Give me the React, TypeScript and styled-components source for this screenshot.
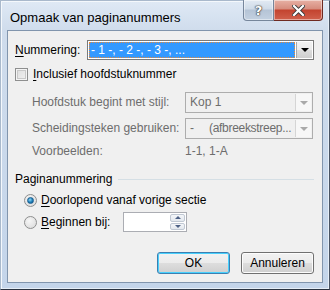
import React from 'react';
import styled, { createGlobalStyle } from 'styled-components';

const GlobalStyle = createGlobalStyle`
  html, body {
    margin: 0;
    padding: 0;
    background: #ffffff;
  }
  body {
    font-family: 'Liberation Sans', Arial, sans-serif;
    font-size: 12px;
    line-height: 15px;
    color: #000;
  }
`;

const Window = styled.div`
  width: 330px;
  height: 290px;
  box-sizing: border-box;
  display: flex;
  flex-direction: column;
  background: linear-gradient(180deg, #dfe9f5 0px, #cfdcec 30px, #c4d5ea 100%);
  border: 1px solid #7b8ea6;
  border-top-color: #a9b9cc;
  border-left-color: #a9b9cc;
  border-bottom-color: #2a3340;
  border-right-color: #4a5565;
  box-shadow: inset 1px 1px 0 #f4f8fc, inset -1px -1px 0 #e6eef7;
`;

const TitleBar = styled.div`
  height: 29px;
  display: flex;
  align-items: flex-start;
  justify-content: space-between;
  padding-left: 9px;
  flex-shrink: 0;
`;

const Title = styled.span`
  font-size: 13px;
  line-height: 15px;
  margin-top: 9px;
`;

const Caption = styled.div`
  display: flex;
  margin-right: 6px;
  margin-top: -1px;
`;

const CaptionButton = styled.div<{ $close?: boolean }>`
  width: ${(p) => (p.$close ? '49px' : '31px')};
  height: 21px;
  box-sizing: border-box;
  display: flex;
  align-items: center;
  justify-content: center;
  border: 1px solid ${(p) => (p.$close ? '#6e2a22' : '#76869b')};
  border-top: none;
  border-radius: ${(p) => (p.$close ? '0 0 4px 0' : '0 0 0 4px')};
  border-left-width: ${(p) => (p.$close ? '0' : '1px')};
  background: ${(p) =>
    p.$close
      ? 'linear-gradient(180deg, #e7b1a5 0%, #d68c7d 45%, #c3432f 50%, #d0604c 100%)'
      : 'linear-gradient(180deg, #e2eaf3 0%, #cfdbe8 45%, #b5c4d6 50%, #c3d1e1 100%)'};
  box-shadow: inset 0 0 0 1px rgba(255, 255, 255, 0.45);
  color: #fff;
  font-family: 'DejaVu Sans', sans-serif;
  font-weight: bold;
  font-size: 13px;
  text-shadow: 0 0 1px #333, 0 0 1px #333, 0 0 2px #444;
`;

const Client = styled.div`
  flex: 1;
  margin: 0 6px 6px 6px;
  border: 1px solid #8195ad;
  background: #f0f0f0;
  padding: 9px 8px 0 7px;
  display: flex;
  flex-direction: column;
`;

const Row = styled.div`
  display: flex;
  align-items: center;
`;

const Label = styled.span<{ $disabled?: boolean }>`
  color: ${(p) => (p.$disabled ? '#6d6d6d' : '#000')};
  white-space: nowrap;
`;

const U = styled.span`
  text-decoration: underline;
  text-underline-offset: 2px;
`;

const MainSelect = styled.div`
  margin-left: auto;
  width: 227px;
  height: 20px;
  box-sizing: border-box;
  border: 1px solid #7a7a7a;
  background: #fff;
  display: flex;
  padding: 1px;
`;

const Highlight = styled.div`
  flex: 1;
  background: #3399ff;
  color: #fff;
  display: flex;
  align-items: center;
  padding-left: 2px;
  outline: 1px dotted #e78a3a;
  outline-offset: -1px;
  white-space: pre;
`;

const DropButton = styled.div<{ $disabled?: boolean }>`
  width: 15px;
  flex-shrink: 0;
  margin-left: 1px;
  display: flex;
  align-items: center;
  justify-content: center;
  background: ${(p) =>
    p.$disabled ? '#f7f7f7' : 'linear-gradient(180deg, #f2f2f2 0%, #ebebeb 50%, #dddddd 51%, #cfcfcf 100%)'};
  border-left: 1px solid ${(p) => (p.$disabled ? '#d5d5d5' : '#aaa')};
`;

const Arrow = styled.div<{ $disabled?: boolean }>`
  width: 0;
  height: 0;
  border-left: 4px solid transparent;
  border-right: 4px solid transparent;
  border-top: 4px solid ${(p) => (p.$disabled ? '#a9a9a9' : '#000')};
`;

const CheckRow = styled(Row)`
  margin-top: 7px;
  height: 15px;
`;

const CheckBox = styled.div`
  width: 13px;
  height: 13px;
  box-sizing: border-box;
  border: 1px solid #8e8f8f;
  background: linear-gradient(135deg, #dcdcdc 0%, #f2f2f2 100%);
  box-shadow: inset 0 0 0 1px #f4f4f4, inset 0 0 0 2px #c8c8c8;
  margin-right: 5px;
`;

const Options = styled.div`
  display: grid;
  grid-template-columns: 153px 128px;
  grid-template-rows: 21px 21px 21px;
  row-gap: 5px;
  margin-top: 10px;
  margin-left: 17px;
  align-items: center;
`;

const ExampleLabel = styled(Label)`
  margin-top: -6px;
`;

const DisabledSelect = styled.div`
  height: 21px;
  box-sizing: border-box;
  border: 1px solid #adadad;
  background: #f0f0f0;
  display: flex;
  padding: 1px;
`;

const DisabledValue = styled.div`
  flex: 1;
  min-width: 0;
  color: #6d6d6d;
  padding-left: 3px;
  display: flex;
  align-items: center;
  white-space: pre;
  overflow: hidden;
`;

const ValueNote = styled.span`
  margin-left: 15px;
  letter-spacing: -0.3px;
`;

const GroupHeader = styled(Row)`
  margin-top: 7px;
  height: 15px;
`;

const GroupLine = styled.div`
  flex: 1;
  height: 0;
  border-top: 1px solid #d5dfe5;
  margin-left: 6px;
`;

const RadioRow = styled(Row)<{ $first?: boolean }>`
  margin-top: ${(p) => (p.$first ? '3px' : '2px')};
  margin-left: 9px;
  height: 20px;
`;

const Radio = styled.div<{ $checked?: boolean }>`
  width: 13px;
  height: 13px;
  box-sizing: border-box;
  border-radius: 50%;
  border: 1px solid #8e8f8f;
  background: radial-gradient(circle at 40% 35%, #f6f6f6 0%, #d8d8d8 100%);
  margin-right: 4px;
  display: flex;
  align-items: center;
  justify-content: center;
  &::after {
    content: '';
    display: ${(p) => (p.$checked ? 'block' : 'none')};
    width: 7px;
    height: 7px;
    border-radius: 50%;
    background: radial-gradient(circle at 40% 35%, #8fd8f7 0%, #1e7fb8 55%, #0d4f86 100%);
    border: 0.5px solid #1a5d8f;
    box-sizing: border-box;
  }
`;

const Spin = styled.div`
  margin-left: auto;
  margin-right: 127px;
  width: 64px;
  height: 20px;
  box-sizing: border-box;
  border: 1px solid #abadb3;
  background: #fff;
  display: flex;
  justify-content: flex-end;
  padding: 1px;
`;

const SpinButtons = styled.div`
  width: 15px;
  display: flex;
  flex-direction: column;
  gap: 1px;
`;

const SpinButton = styled.div<{ $up?: boolean }>`
  flex: 1;
  border: 1px solid #c0c8d3;
  border-radius: 2px;
  background: linear-gradient(180deg, #f4f6f9 0%, #e3e8ee 100%);
  display: flex;
  align-items: center;
  justify-content: center;
  &::after {
    content: '';
    width: 0;
    height: 0;
    border-left: 3px solid transparent;
    border-right: 3px solid transparent;
    ${(p) => (p.$up ? 'border-bottom: 3px solid #4d6185;' : 'border-top: 3px solid #4d6185;')}
  }
`;

const Buttons = styled.div`
  margin-top: auto;
  margin-bottom: 8px;
  display: flex;
  justify-content: flex-end;
  gap: 11px;
`;

const Button = styled.div<{ $default?: boolean }>`
  width: 73px;
  height: 22px;
  box-sizing: border-box;
  border: 1px solid ${(p) => (p.$default ? '#3c7fb1' : '#707070')};
  border-radius: 3px;
  background: linear-gradient(180deg, #f2f2f2 0%, #ebebeb 50%, #dddddd 51%, #cfcfcf 100%);
  box-shadow: inset 0 0 0 1px ${(p) => (p.$default ? '#48d0fd' : '#fcfcfc')};
  display: flex;
  align-items: center;
  justify-content: center;
`;

export default function App() {
  return (
    <>
      <GlobalStyle />
      <Window>
        <TitleBar>
          <Title>Opmaak van paginanummers</Title>
          <Caption>
            <CaptionButton>?</CaptionButton>
            <CaptionButton $close>
              <svg width="13" height="11" viewBox="0 0 13 11">
                <path d="M2 1 L11 10 M11 1 L2 10" stroke="#3b3b3b" strokeWidth="4" strokeLinecap="square" />
                <path d="M2 1 L11 10 M11 1 L2 10" stroke="#fff" strokeWidth="2.2" strokeLinecap="square" />
              </svg>
            </CaptionButton>
          </Caption>
        </TitleBar>
        <Client>
          <Row>
            <Label>
              <U>N</U>ummering:
            </Label>
            <MainSelect>
              <Highlight>{'- 1 -, - 2 -, - 3 -, ...'}</Highlight>
              <DropButton>
                <Arrow />
              </DropButton>
            </MainSelect>
          </Row>
          <CheckRow>
            <CheckBox />
            <Label>
              <U>I</U>nclusief hoofdstuknummer
            </Label>
          </CheckRow>
          <Options>
            <Label $disabled>Hoofdstuk begint met stijl:</Label>
            <DisabledSelect>
              <DisabledValue>Kop 1</DisabledValue>
              <DropButton $disabled>
                <Arrow $disabled />
              </DropButton>
            </DisabledSelect>
            <Label $disabled>Scheidingsteken gebruiken:</Label>
            <DisabledSelect>
              <DisabledValue>
                -<ValueNote>(afbreekstreep...</ValueNote>
              </DisabledValue>
              <DropButton $disabled>
                <Arrow $disabled />
              </DropButton>
            </DisabledSelect>
            <ExampleLabel $disabled>Voorbeelden:</ExampleLabel>
            <ExampleLabel $disabled>1-1, 1-A</ExampleLabel>
          </Options>
          <GroupHeader>
            <Label>Paginanummering</Label>
            <GroupLine />
          </GroupHeader>
          <RadioRow $first>
            <Radio $checked />
            <Label>
              <U>D</U>oorlopend vanaf vorige sectie
            </Label>
          </RadioRow>
          <RadioRow>
            <Radio />
            <Label>
              <U>B</U>eginnen bij:
            </Label>
            <Spin>
              <SpinButtons>
                <SpinButton $up />
                <SpinButton />
              </SpinButtons>
            </Spin>
          </RadioRow>
          <Buttons>
            <Button $default>OK</Button>
            <Button>Annuleren</Button>
          </Buttons>
        </Client>
      </Window>
    </>
  );
}
